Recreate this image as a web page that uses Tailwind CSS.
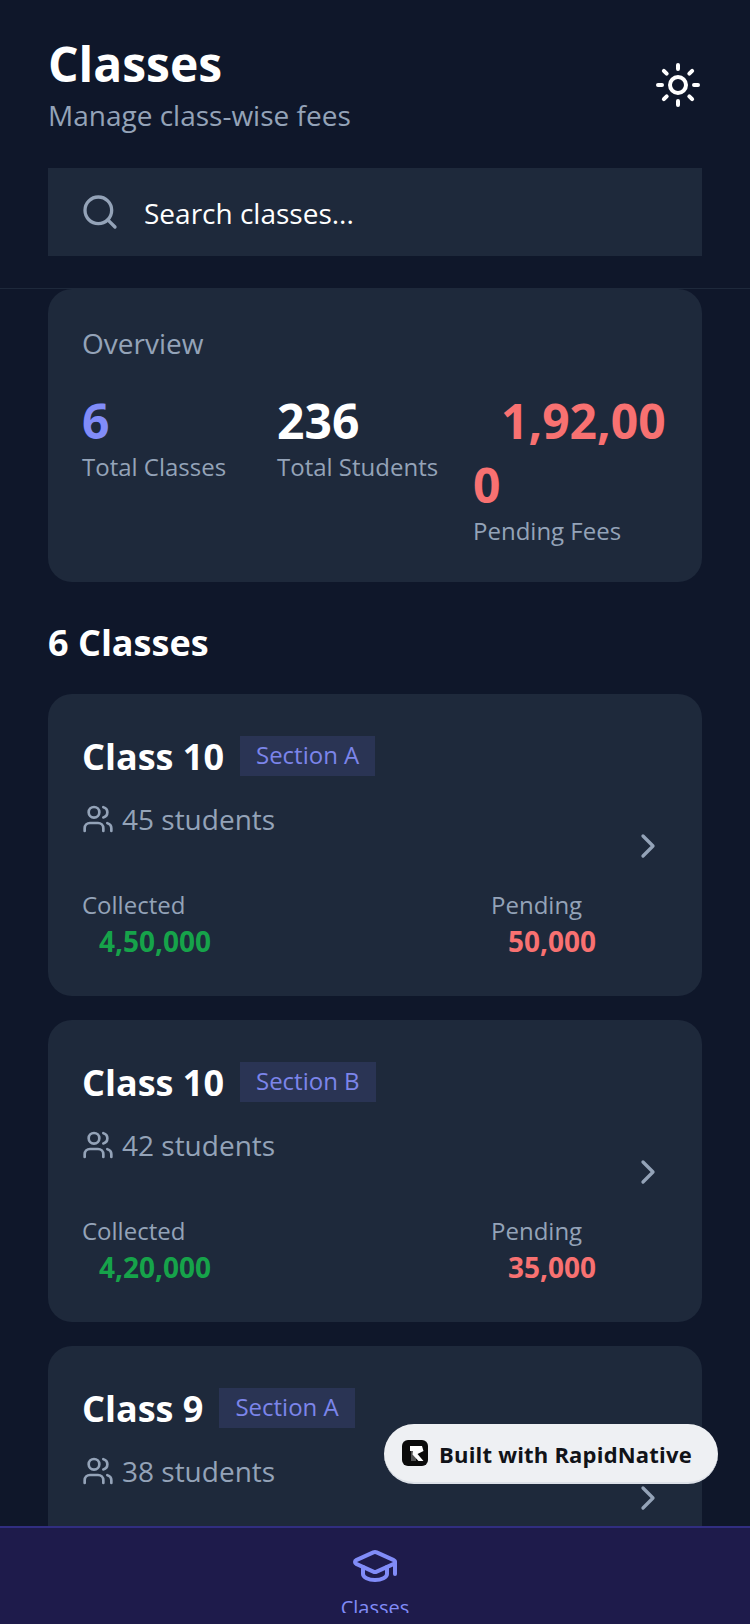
<!DOCTYPE html>
<html lang="en">
  <head>
    <meta charset="UTF-8" />
    <meta name="viewport" content="width=device-width, initial-scale=1" />
    <title>Classes</title>
    <script src="https://cdn.jsdelivr.net/npm/@tailwindcss/browser@4"></script>
  </head>
  <body class="bg-[#0f172a] font-['Open_Sans',sans-serif]">
    <div class="relative flex flex-col h-[1624px] w-[750px] overflow-hidden">
      <!-- Header -->
      <header class="shrink-0 h-[289px] px-[48px] pt-[32px] border-b border-[#1e293b]">
        <div class="flex items-center justify-between">
          <div>
            <h1 class="text-[48px] leading-[64px] font-bold text-white">Classes</h1>
            <p class="mt-[1px] text-[28px] leading-[36px] text-[#94a3b8]">Manage class-wise fees</p>
          </div>
          <svg class="mt-[4px]" width="48" height="48" viewBox="0 0 24 24" fill="none" stroke="#fff" stroke-width="2" stroke-linecap="round" stroke-linejoin="round">
            <circle cx="12" cy="12" r="4" />
            <path d="M12 2v2M12 20v2M4.93 4.93l1.41 1.41M17.66 17.66l1.41 1.41M2 12h2M20 12h2M6.34 17.66l-1.41 1.41M19.07 4.93l-1.41 1.41" />
          </svg>
        </div>
        <div class="mt-[35px] h-[88px] bg-[#1e293b] flex items-center pl-[32px] gap-[24px]">
          <svg width="40" height="40" viewBox="0 0 24 24" fill="none" stroke="#94a3b8" stroke-width="2" stroke-linecap="round" stroke-linejoin="round">
            <circle cx="11" cy="11" r="8" />
            <path d="m21 21-4.3-4.3" />
          </svg>
          <span class="pt-[2px] text-[28px] text-white">Search classes...</span>
        </div>
      </header>

      <!-- Scroll area -->
      <main class="flex-1 overflow-hidden px-[48px]">
        <section class="h-[293px] bg-[#1e293b] rounded-[24px] p-[34px] pt-[36px]">
          <p class="text-[28px] leading-[36px] text-[#94a3b8]">Overview</p>
          <div class="flex mt-[28px]">
            <div class="w-[195px]">
              <p class="mb-[-2px] text-[48px] leading-[64px] font-bold text-[#818cf8]">6</p>
              <p class="text-[24px] leading-[32px] text-[#94a3b8]">Total Classes</p>
            </div>
            <div class="w-[196px]">
              <p class="mb-[-2px] text-[48px] leading-[64px] font-bold text-white">236</p>
              <p class="text-[24px] leading-[32px] text-[#94a3b8]">Total Students</p>
            </div>
            <div>
              <p class="mb-[-2px] text-[48px] leading-[64px] font-bold text-[#f87171]"><span class="inline-block w-[28px]"></span>1,92,00<br />0</p>
              <p class="text-[24px] leading-[32px] text-[#94a3b8]">Pending Fees</p>
            </div>
          </div>
        </section>

        <h2 class="mt-[38px] text-[36px] leading-[46px] font-bold text-white">6 Classes</h2>

        <div class="mt-[28px] flex flex-col gap-[24px]">
          <!-- Class 10 A -->
          <article class="h-[302px] bg-[#1e293b] rounded-[24px] px-[34px] pt-[39px] pb-[38px] flex items-center">
            <div class="flex-1 self-start">
              <div class="flex items-center gap-[16px]">
                <h3 class="text-[36px] leading-[48px] font-bold text-white">Class 10</h3>
                <span class="-mt-[2px] h-[40px] px-[16px] bg-[#2a3454] text-[24px] leading-[38px] text-[#7c85ea]">Section A</span>
              </div>
              <div class="mt-[18px] flex items-center gap-[8px] text-[28px] leading-[40px] text-[#94a3b8]">
                <svg width="32" height="32" viewBox="0 0 24 24" fill="none" stroke="#94a3b8" stroke-width="2" stroke-linecap="round" stroke-linejoin="round"><path d="M16 21v-2a4 4 0 0 0-4-4H6a4 4 0 0 0-4 4v2" /><circle cx="9" cy="7" r="4" /><path d="M22 21v-2a4 4 0 0 0-3-3.87" /><path d="M16 3.13a4 4 0 0 1 0 7.75" /></svg>
                45 students
              </div>
              <div class="mt-[50px] flex">
                <div class="w-[409px]">
                  <p class="text-[24px] leading-[32px] text-[#94a3b8]">Collected</p>
                  <p class="pl-[17px] text-[28px] leading-[40px] font-bold text-[#16a34a]">4,50,000</p>
                </div>
                <div>
                  <p class="text-[24px] leading-[32px] text-[#94a3b8]">Pending</p>
                  <p class="pl-[17px] text-[28px] leading-[40px] font-bold text-[#f87171]">50,000</p>
                </div>
              </div>
            </div>
            <svg class="shrink-0" width="40" height="40" viewBox="0 0 24 24" fill="none" stroke="#94a3b8" stroke-width="2" stroke-linecap="round" stroke-linejoin="round"><path d="m9 18 6-6-6-6" /></svg>
          </article>

          <!-- Class 10 B -->
          <article class="h-[302px] bg-[#1e293b] rounded-[24px] px-[34px] pt-[39px] pb-[38px] flex items-center">
            <div class="flex-1 self-start">
              <div class="flex items-center gap-[16px]">
                <h3 class="text-[36px] leading-[48px] font-bold text-white">Class 10</h3>
                <span class="-mt-[2px] h-[40px] px-[16px] bg-[#2a3454] text-[24px] leading-[38px] text-[#7c85ea]">Section B</span>
              </div>
              <div class="mt-[18px] flex items-center gap-[8px] text-[28px] leading-[40px] text-[#94a3b8]">
                <svg width="32" height="32" viewBox="0 0 24 24" fill="none" stroke="#94a3b8" stroke-width="2" stroke-linecap="round" stroke-linejoin="round"><path d="M16 21v-2a4 4 0 0 0-4-4H6a4 4 0 0 0-4 4v2" /><circle cx="9" cy="7" r="4" /><path d="M22 21v-2a4 4 0 0 0-3-3.87" /><path d="M16 3.13a4 4 0 0 1 0 7.75" /></svg>
                42 students
              </div>
              <div class="mt-[50px] flex">
                <div class="w-[409px]">
                  <p class="text-[24px] leading-[32px] text-[#94a3b8]">Collected</p>
                  <p class="pl-[17px] text-[28px] leading-[40px] font-bold text-[#16a34a]">4,20,000</p>
                </div>
                <div>
                  <p class="text-[24px] leading-[32px] text-[#94a3b8]">Pending</p>
                  <p class="pl-[17px] text-[28px] leading-[40px] font-bold text-[#f87171]">35,000</p>
                </div>
              </div>
            </div>
            <svg class="shrink-0" width="40" height="40" viewBox="0 0 24 24" fill="none" stroke="#94a3b8" stroke-width="2" stroke-linecap="round" stroke-linejoin="round"><path d="m9 18 6-6-6-6" /></svg>
          </article>

          <!-- Class 9 A -->
          <article class="h-[302px] bg-[#1e293b] rounded-[24px] px-[34px] pt-[39px] pb-[38px] flex items-center">
            <div class="flex-1 self-start">
              <div class="flex items-center gap-[16px]">
                <h3 class="text-[36px] leading-[48px] font-bold text-white">Class 9</h3>
                <span class="-mt-[2px] h-[40px] px-[16px] bg-[#2a3454] text-[24px] leading-[38px] text-[#7c85ea]">Section A</span>
              </div>
              <div class="mt-[18px] flex items-center gap-[8px] text-[28px] leading-[40px] text-[#94a3b8]">
                <svg width="32" height="32" viewBox="0 0 24 24" fill="none" stroke="#94a3b8" stroke-width="2" stroke-linecap="round" stroke-linejoin="round"><path d="M16 21v-2a4 4 0 0 0-4-4H6a4 4 0 0 0-4 4v2" /><circle cx="9" cy="7" r="4" /><path d="M22 21v-2a4 4 0 0 0-3-3.87" /><path d="M16 3.13a4 4 0 0 1 0 7.75" /></svg>
                38 students
              </div>
            </div>
            <svg class="shrink-0" width="40" height="40" viewBox="0 0 24 24" fill="none" stroke="#94a3b8" stroke-width="2" stroke-linecap="round" stroke-linejoin="round"><path d="m9 18 6-6-6-6" /></svg>
          </article>
        </div>
      </main>

      <!-- Tab bar -->
      <nav class="shrink-0 h-[98px] bg-[#1e1b4b] border-t-2 border-[#312e81]">
        <div class="h-[85px] overflow-hidden flex flex-col items-center pt-[14px]">
          <svg class="shrink-0" width="48" height="48" viewBox="0 0 24 24" fill="none" stroke="#818cf8" stroke-width="2" stroke-linecap="round" stroke-linejoin="round"><path d="M21.42 10.922a1 1 0 0 0-.019-1.838L12.83 5.18a2 2 0 0 0-1.66 0L2.6 9.08a1 1 0 0 0 0 1.832l8.57 3.908a2 2 0 0 0 1.66 0z" /><path d="M22 10v6" /><path d="M6 12.5V16a6 3 0 0 0 12 0v-3.5" /></svg>
          <span class="mt-[4px] text-[20px] leading-[28px] text-[#818cf8]">Classes</span>
        </div>
      </nav>

      <!-- Floating badge -->
      <div class="absolute left-[384px] top-[1424px] w-[334px] h-[60px] rounded-full bg-[#eef0f3] border-b-2 border-[#dde1e8] flex items-center pl-[18px] gap-[11px]">
        <svg class="shrink-0" width="26" height="26" viewBox="0 0 26 26">
          <rect width="26" height="26" rx="6" fill="#0b0b0b" />
          <path d="M9 11h4l1 5v5H9z" fill="#555" />
          <path d="M8 6h12l1.5 5-6 3 6 7h-5l-6-6.5L11 11H8z" fill="#fff" />
        </svg>
        <span class="pt-[2px] text-[22px] tracking-[0.2px] font-bold text-[#111318]">Built with RapidNative</span>
      </div>
    </div>
  </body>
</html>
